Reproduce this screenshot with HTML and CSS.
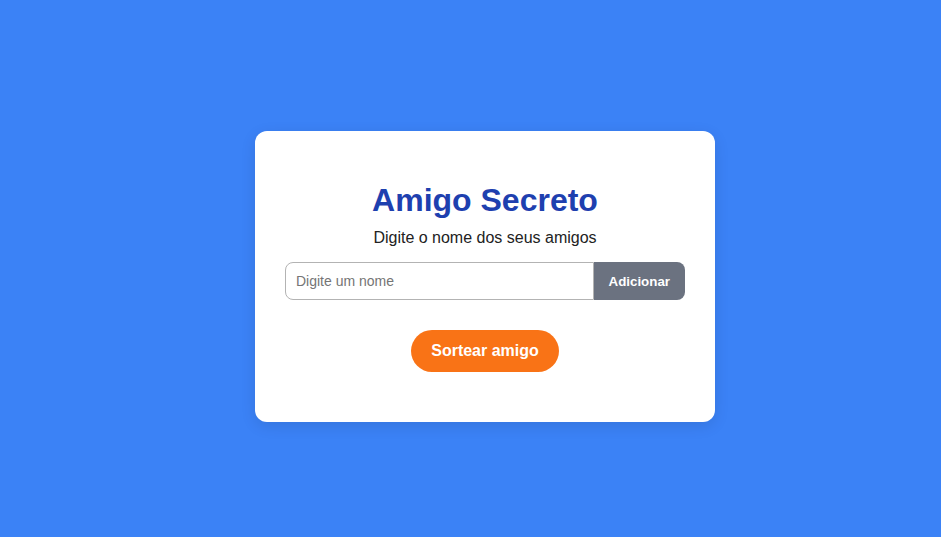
FILE: index.html
```html
<!DOCTYPE html>
<html lang="pt-BR">
<head>
  <meta charset="UTF-8">
  <meta name="viewport" content="width=device-width, initial-scale=1.0">
  <title>Amigo Secreto</title>
  <link rel="stylesheet" href="styles.css">
</head>
<body>
  <main class="card">
    <h1 class="title">Amigo Secreto</h1>
    <label class="subtitle" for="amigo">Digite o nome dos seus amigos</label>
    <form class="input-row">
      <input class="name-input" type="text" id="amigo" placeholder="Digite um nome">
      <button class="add-button" type="button">Adicionar</button>
    </form>
    <button class="draw-button" type="button">Sortear amigo</button>
  </main>
</body>
</html>
```
FILE: styles.css
```css
* {
  box-sizing: border-box;
}

body {
  margin: 0;
  min-height: 100vh;
  padding: 16px 0 0 29px;
  display: flex;
  justify-content: center;
  align-items: center;
  background: #3b82f6;
  color: #222;
  font-family: "Liberation Sans", Arial, sans-serif;
}

.card {
  width: 100%;
  max-width: 460px;
  padding: 50px 30px;
  display: flex;
  flex-direction: column;
  align-items: center;
  background: #fff;
  border-radius: 12px;
  box-shadow: 0 4px 15px rgba(0, 0, 0, 0.1);
}

.title {
  margin: 0 0 10px;
  color: #1e40af;
  font-size: 32px;
  line-height: 38px;
}

.subtitle {
  margin-bottom: 15px;
  font-size: 16px;
  line-height: 18px;
}

.input-row {
  width: 100%;
  margin-bottom: 30px;
  display: flex;
}

.name-input {
  flex: 1;
  min-width: 0;
  height: 38px;
  padding: 10px;
  border: 1px solid #b3b3b3;
  border-radius: 8px 0 0 8px;
  font-family: inherit;
  font-size: 14px;
}

.name-input::placeholder {
  color: #757575;
}

.add-button {
  padding: 10px 15px;
  border: 0;
  border-radius: 0 8px 8px 0;
  background: #6b7280;
  color: #fff;
  font-family: inherit;
  font-weight: bold;
}

.draw-button {
  padding: 12px 20px;
  border: 0;
  border-radius: 25px;
  background: #f97316;
  color: #fff;
  font-family: inherit;
  font-size: 16px;
  font-weight: bold;
  line-height: 18px;
}
```
